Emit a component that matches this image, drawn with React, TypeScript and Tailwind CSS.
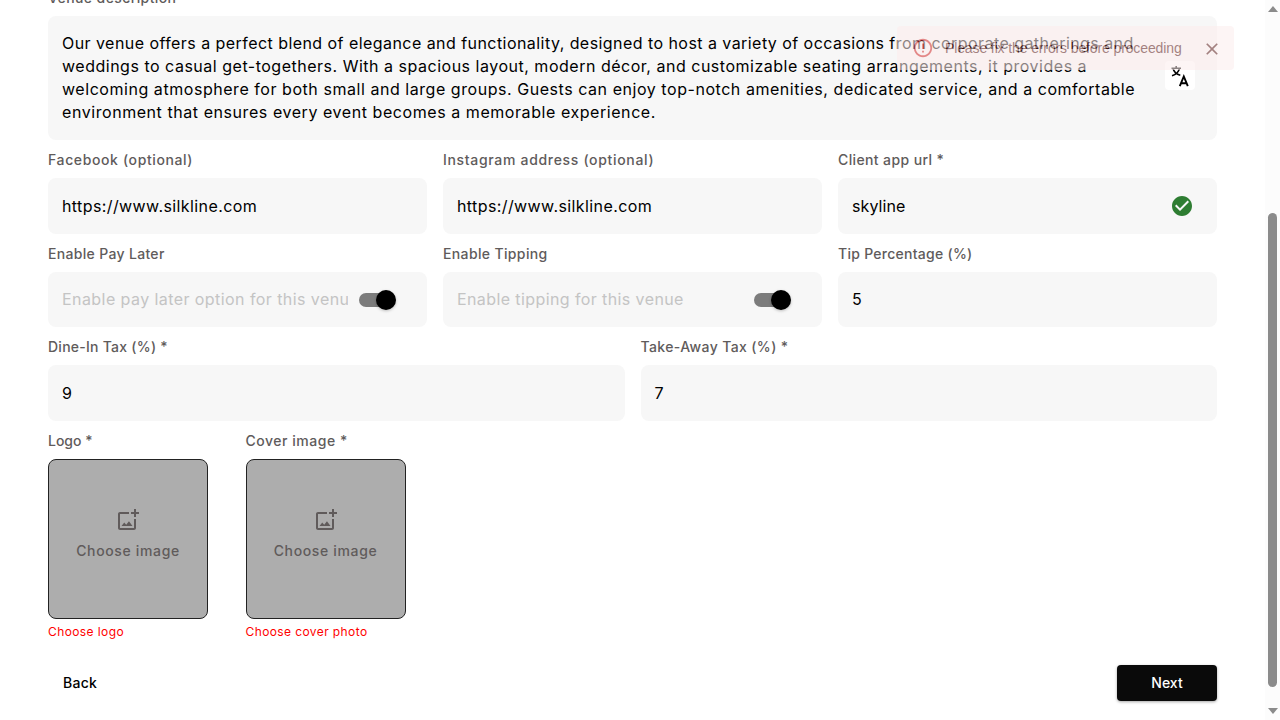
import type { ReactNode } from "react";
import { MdCheckCircle, MdClose, MdErrorOutline, MdOutlineAddPhotoAlternate } from "react-icons/md";

function Label({ children, className = "" }: { children: ReactNode; className?: string }) {
  return <div className={`h-[21px] whitespace-nowrap text-sm leading-[21px] font-medium text-[#605b5b] ${className}`}>{children}</div>;
}

interface FieldProps {
  label: string;
  labelClass?: string;
  boxClass?: string;
  children: ReactNode;
}

function Field({ label, labelClass, boxClass = "h-14", children }: FieldProps) {
  return (
    <div className="min-w-0 flex-1">
      <Label className={labelClass}>{label}</Label>
      <div className={`mt-2 flex items-center rounded-lg bg-[#f7f7f7] px-3.5 text-base whitespace-nowrap text-black ${boxClass}`}>{children}</div>
    </div>
  );
}

function Toggle() {
  return (
    <div className="relative mr-[17px] ml-auto h-5 w-[37px] shrink-0">
      <div className="mt-[3px] h-3.5 w-[34px] rounded-full bg-[#7c7c7c]" />
      <div className="absolute top-0 right-0 size-5 rounded-full bg-black shadow-[0_1px_3px_rgba(0,0,0,0.25)]" />
    </div>
  );
}

function TranslateIcon() {
  return (
    <svg width="18" height="22" viewBox="0 0 18 22" fill="none" stroke="currentColor">
      <path d="M0.5 3.3H10M5.2 1v2.3M2 3.5C3 7 5.5 9.3 9.3 10.3M8.5 3.5C7.5 7 5 9.6 1 10.7" strokeWidth="1.6" />
      <path d="M8.8 21.2L12.8 11.5L16.8 21.2M10.2 18.2h5.2" strokeWidth="1.9" />
    </svg>
  );
}

interface UploadProps {
  label: string;
  error: string;
  labelClass?: string;
}

function Upload({ label, error, labelClass }: UploadProps) {
  return (
    <div className="w-40">
      <Label className={labelClass}>{label}</Label>
      <div className="mt-2 flex h-40 w-40 flex-col items-center justify-center rounded-lg border border-[#222] bg-[#adadad] pb-[9px] text-[#605b5b]">
        <MdOutlineAddPhotoAlternate className="size-6" />
        <span className="mt-2 text-sm leading-[21px] font-medium tracking-[0.65px] whitespace-nowrap">Choose image</span>
      </div>
      <div className="mt-1 text-xs leading-[18px] tracking-[0.4px] whitespace-nowrap text-[#ff0000]">{error}</div>
    </div>
  );
}

export default function App() {
  return (
    <div className="relative flex h-[720px] w-[1280px] overflow-hidden bg-white font-['Inter',sans-serif]">
      <main className="-mt-[13px] w-[1265px] shrink-0 px-12">
        <Label className="tracking-[0.4px]">Venue description</Label>
        <div className="relative mt-2 h-[124px] rounded-lg bg-[#f7f7f7] px-3.5 pt-4 text-base leading-[23px] whitespace-nowrap text-black">
          <div className="tracking-[0.444px]">Our venue offers a perfect blend of elegance and functionality, designed to host a variety of occasions from corporate gatherings and</div>
          <div className="tracking-[0.51px]">weddings to casual get-togethers. With a spacious layout, modern décor, and customizable seating arrangements, it provides a</div>
          <div className="tracking-[0.547px]">welcoming atmosphere for both small and large groups. Guests can enjoy top-notch amenities, dedicated service, and a comfortable</div>
          <div className="tracking-[0.56px]">environment that ensures every event becomes a memorable experience.</div>
          <div className="absolute top-[45px] right-[22px] flex h-[29px] w-[30px] items-center justify-center rounded bg-white">
            <TranslateIcon />
          </div>
        </div>
        <div className="mt-[9px] flex gap-4">
          <Field label="Facebook (optional)" labelClass="tracking-[0.62px]">
            <span className="tracking-[0.4px]">https://www.silkline.com</span>
          </Field>
          <Field label="Instagram address (optional)" labelClass="tracking-[0.68px]">
            <span className="tracking-[0.4px]">https://www.silkline.com</span>
          </Field>
          <Field label="Client app url *" labelClass="tracking-[0.38px]">
            <span className="tracking-[0.1px]">skyline</span>
            <MdCheckCircle className="mr-[9px] ml-auto size-6 text-[#2e7d32]" />
          </Field>
        </div>
        <div className="mt-[9px] flex gap-4">
          <Field label="Enable Pay Later" labelClass="tracking-[0.32px]" boxClass="h-[55px]">
            <span className="w-[286px] overflow-hidden pb-px tracking-[0.43px] text-[#c4c4c4]">Enable pay later option for this venue</span>
            <Toggle />
          </Field>
          <Field label="Enable Tipping" labelClass="tracking-[0.36px]" boxClass="h-[55px]">
            <span className="pb-px tracking-[0.4px] text-[#c4c4c4]">Enable tipping for this venue</span>
            <Toggle />
          </Field>
          <Field label="Tip Percentage (%)" labelClass="tracking-[0.27px]" boxClass="h-[55px]">
            <span className="pb-px">5</span>
          </Field>
        </div>
        <div className="mt-[9px] flex gap-4">
          <Field label="Dine-In Tax (%) *" labelClass="tracking-[0.25px]">9</Field>
          <Field label="Take-Away Tax (%) *" labelClass="tracking-[0.38px]">7</Field>
        </div>
        <div className="mt-[9px] flex gap-[37.5px]">
          <Upload label="Logo *" error="Choose logo" />
          <Upload label="Cover image *" error="Choose cover photo" labelClass="tracking-[0.52px]" />
        </div>
        <div className="mt-6 flex h-9 items-center justify-between text-sm font-medium">
          <span className="pl-[15px] tracking-[0.25px] text-black">Back</span>
          <span className="flex h-9 w-[100px] items-center justify-center rounded bg-[#0a0a0a] text-white shadow-[0_1px_3px_rgba(0,0,0,0.35)]">Next</span>
        </div>
      </main>
      <aside className="flex w-[15px] flex-col items-center bg-[#fcfcfc]">
        <div className="mt-[6px] h-0 w-0 border-x-[5px] border-b-[6px] border-x-transparent border-b-[#8b8b8b]" />
        <div className="mt-[201px] h-[474px] w-[9px] rounded-full bg-[#8b8b8b]" />
        <div className="mt-[21px] h-0 w-0 border-x-[5px] border-t-[6px] border-x-transparent border-t-[#8b8b8b]" />
      </aside>
      <div className="absolute top-[26px] left-[897px] flex h-11 w-[337px] items-center rounded bg-[#fdeded] pr-3 pl-[15px] font-['Liberation_Sans',sans-serif] text-sm tracking-[-0.12px] whitespace-nowrap text-[#5f2120] opacity-55">
        <MdErrorOutline className="size-[22px] text-[#d32f2f]" />
        <span className="ml-[11px]">Please fix the errors before proceeding</span>
        <MdClose className="mt-px ml-auto size-5" />
      </div>
    </div>
  );
}
